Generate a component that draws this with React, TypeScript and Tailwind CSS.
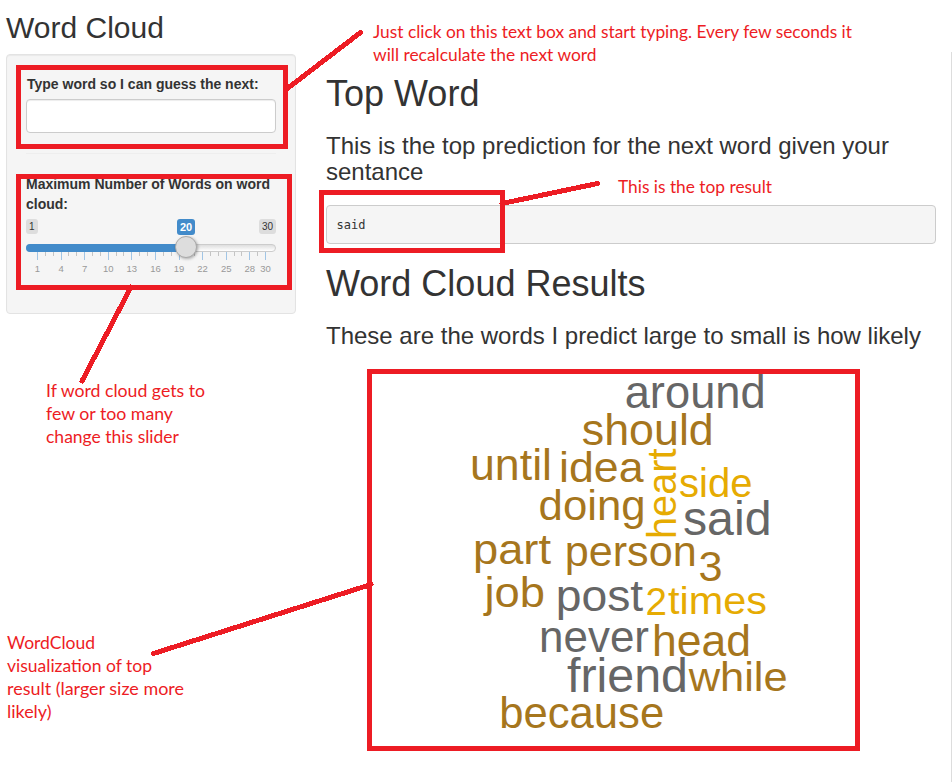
import React from "react";

type Word = {
  text: string;
  x: number;
  y: number;
  size: number;
  length: number;
  color: string;
  vertical?: boolean;
};

const BROWN = "#a6761d";
const GOLD = "#e6ab02";
const GRAY = "#666666";
const RED = "#ed1c24";

// Coordinates are relative to the plot's own top left corner.
const words: Word[] = [
  { text: "around", x: 257.7, y: 38.5, size: 47, length: 141, color: GRAY },
  { text: "should", x: 214.8, y: 76, size: 44, length: 132, color: BROWN },
  { text: "until", x: 103, y: 111, size: 43.5, length: 82, color: BROWN },
  { text: "idea", x: 192, y: 112.7, size: 43, length: 84.5, color: BROWN },
  { text: "doing", x: 171.6, y: 151, size: 43, length: 107, color: BROWN },
  { text: "heart", x: 307, y: 170, size: 41, length: 90.5, color: GOLD, vertical: true },
  { text: "side", x: 312, y: 127.8, size: 40.5, length: 73.5, color: GOLD },
  { text: "said", x: 316, y: 166, size: 47.5, length: 88.5, color: GRAY },
  { text: "part", x: 106, y: 195, size: 43, length: 78, color: BROWN },
  { text: "person", x: 197.7, y: 196.7, size: 42.5, length: 132, color: BROWN },
  { text: "3", x: 331.5, y: 211.5, size: 42, length: 24, color: BROWN },
  { text: "job", x: 117.5, y: 237.5, size: 43, length: 60.5, color: BROWN },
  { text: "post", x: 188.7, y: 242.3, size: 44, length: 87.5, color: GRAY },
  { text: "2", x: 278.5, y: 245.5, size: 38.5, length: 21.5, color: GOLD },
  { text: "times", x: 301, y: 244.7, size: 39.5, length: 99, color: GOLD },
  { text: "never", x: 172, y: 282.6, size: 44, length: 110, color: GRAY },
  { text: "head", x: 285, y: 286.8, size: 43.5, length: 99, color: BROWN },
  { text: "friend", x: 200, y: 322.8, size: 47.5, length: 121, color: GRAY },
  { text: "while", x: 321.7, y: 321.5, size: 41.5, length: 99, color: BROWN },
  { text: "because", x: 132.2, y: 358.8, size: 43.5, length: 165, color: BROWN },
];

const notes = [
  { text: "Just click on this text box and start typing. Every few seconds it", x: 373, y: 38, length: 479 },
  { text: "will recalculate the next word", x: 373, y: 61, length: 223.5 },
  { text: "This is the top result", x: 618, y: 193, length: 154 },
  { text: "If word cloud gets to", x: 46, y: 397, length: 159 },
  { text: "few or too many", x: 46, y: 420, length: 127 },
  { text: "change this slider", x: 46, y: 443, length: 133 },
  { text: "WordCloud", x: 7, y: 649, length: 88 },
  { text: "visualization of top", x: 7, y: 672, length: 145 },
  { text: "result (larger size more", x: 7, y: 695, length: 177 },
  { text: "likely)", x: 7, y: 718, length: 44.5 },
];

const tickLabels = [1, 4, 7, 10, 13, 16, 19, 22, 25, 28, 30];
const tickX = (n: number) => 11.5 + ((n - 1) * 228) / 29;

function SliderScale() {
  return (
    <svg width="250" height="24" className="block overflow-visible" fontFamily="'Liberation Sans', Arial, sans-serif">
      {Array.from({ length: 30 }, (_, i) => i + 1).map((n) => {
        const major = tickLabels.includes(n);
        return (
          <rect
            key={n}
            x={Math.floor(tickX(n))}
            y="0"
            width="1"
            height={major ? 8 : 4}
            fill={major ? "#a1c5e5" : "#c4c4c4"}
          />
        );
      })}
      {tickLabels.map((n) => (
        <text key={n} x={tickX(n)} y="20" fontSize="9.500" fill="#999999" textAnchor="middle">
          {n}
        </text>
      ))}
    </svg>
  );
}

function Slider() {
  return (
    <div className="relative mt-[5px] h-[56px]">
      <div className="flex h-[15px] justify-between text-[10px] leading-[15px] text-[#333]">
        <span className="rounded-[3px] bg-[#dddddd] px-[3px]">1</span>
        <span className="rounded-[3px] bg-[#dddddd] px-[3px]">30</span>
      </div>
      <span className="absolute left-[151px] top-0 h-[16px] w-[18px] rounded-[3px] bg-[#428bca] text-center text-[11px] font-bold leading-[16px] text-white">
        20
      </span>
      <div className="mt-[10px] h-2 rounded-lg border border-[#cccccc] bg-gradient-to-b from-[#dedede] to-white">
        <div className="-m-px h-2 w-[160px] rounded-l-lg bg-[#428bca]" />
      </div>
      <SliderScale />
      <span className="absolute left-[149px] top-[17px] size-[22px] rounded-full border border-[#aaaaaa] bg-[#dddddd] shadow-[1px_1px_3px_rgba(0,0,0,0.3)]" />
    </div>
  );
}

function WordCloud() {
  return (
    <svg width="493" height="382" className="ml-[41px] mt-[19px] block shrink-0" fontFamily="'Liberation Sans', Arial, sans-serif">
      {words.map((w) => (
        <text
          key={w.text}
          x={w.vertical ? 0 : w.x}
          y={w.vertical ? 0 : w.y}
          transform={w.vertical ? `translate(${w.x + 2} ${w.y}) rotate(-90)` : undefined}
          fontSize={w.size}
          textLength={w.length}
          lengthAdjust="spacingAndGlyphs"
          fill={w.color}
        >
          {w.text}
        </text>
      ))}
    </svg>
  );
}

function Annotations() {
  return (
    <svg width="952" height="782" className="pointer-events-none absolute left-0 top-0">
      <g fill="none" stroke={RED} strokeWidth="5" shapeRendering="crispEdges">
        <rect x="18.5" y="67.5" width="267" height="79" />
        <rect x="18.5" y="176.5" width="271" height="111" />
        <rect x="321.5" y="192.5" width="181" height="58" />
        <rect x="369.5" y="371.5" width="488" height="377" />
        <g strokeLinecap="round">
          <path d="M288 88L360.500 32.500" />
          <path d="M502 203.500L597.500 183.500" />
          <path d="M131 287L82 381" />
          <path d="M153.500 653.500L371 584.500" />
        </g>
      </g>
      <g fill={RED} fontFamily="Lato, Carlito, sans-serif" fontSize="16.600">
        {notes.map((n) => (
          <text key={n.text} x={n.x} y={n.y} textLength={n.length} lengthAdjust="spacingAndGlyphs">
            {n.text}
          </text>
        ))}
      </g>
    </svg>
  );
}

export default function App() {
  return (
    <div className="relative flex h-[782px] w-[952px] flex-col overflow-hidden bg-white font-['Liberation_Sans',Arial,sans-serif] text-sm text-[#333333]">
      <header className="h-[52px] shrink-0 pl-1.5 pt-[11px]">
        <h2 className="text-[30px] leading-[33px]">Word Cloud</h2>
      </header>
      <div className="flex flex-1 items-start border-r border-[#dddddd] pl-1.5 pt-0.5">
        <aside className="h-[260px] w-[290px] shrink-0 rounded border border-[#e3e3e3] bg-[#f5f5f5] p-[19px] shadow-[inset_0_1px_1px_rgba(0,0,0,0.05)]">
          <label htmlFor="phrase" className="block pl-px font-bold leading-5">
            Type word so I can guess the next:
          </label>
          <input
            id="phrase"
            className="mt-[5px] block h-[34px] w-full rounded border border-[#cccccc] bg-white px-3 shadow-[inset_0_1px_1px_rgba(0,0,0,0.075)]"
          />
          <hr className="my-5 border-t border-[#eeeeee]" />
          <p className="font-bold leading-5">Maximum Number of Words on word cloud:</p>
          <Slider />
        </aside>
        <main className="ml-[30px] flex w-[610px] flex-col pt-5">
          <h1 className="text-[36px] leading-[39.6px]">Top Word</h1>
          <h3 className="mt-[19px] text-2xl leading-[26.4px]">
            This is the top prediction for the next word given your sentance
          </h3>
          <pre className="mt-[19.600px] h-[39px] rounded border border-[#cccccc] bg-[#f5f5f5] px-[9.5px] py-[9.5px] font-['DejaVu_Sans_Mono',monospace] text-[12px] leading-[18.5px]">
            said
          </pre>
          <h1 className="mt-5 text-[36px] leading-[39.6px]">Word Cloud Results</h1>
          <h3 className="mt-[19px] whitespace-nowrap text-2xl leading-[26.4px]">
            These are the words I predict large to small is how likely
          </h3>
          <div className="pt-px">
            <WordCloud />
          </div>
        </main>
      </div>
      <Annotations />
    </div>
  );
}
